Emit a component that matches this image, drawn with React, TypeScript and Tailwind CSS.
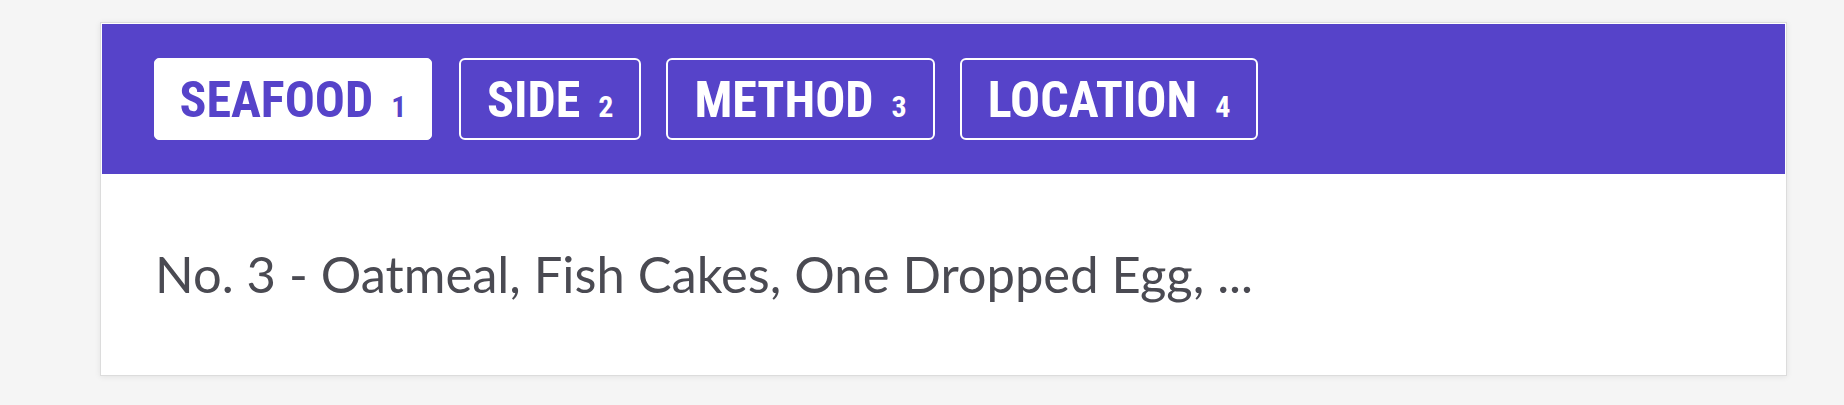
const tabs = [
  { label: 'SEAFOOD', count: 1, active: true },
  { label: 'SIDE', count: 2, active: false },
  { label: 'METHOD', count: 3, active: false },
  { label: 'LOCATION', count: 4, active: false },
];

export default function App() {
  return (
    <div className="min-h-[405px] w-full bg-[#f5f5f5] pt-[22px]">
      <div className="ml-[100px] w-[1687px] border border-[#dcdcdc] bg-white p-px shadow-[0_1px_6px_rgba(0,0,0,0.08)]">
        {/* category tabs */}
        <div className="flex h-[150px] items-center gap-[25px] bg-[#5643c9] px-[52px]">
          {tabs.map((t) => (
            <button
              key={t.label}
              className={
                t.active
                  ? 'mr-[2px] flex h-[82px] items-baseline rounded-[5px] border border-white bg-white px-[24.5px] pt-[2px] text-[#5643c9]'
                  : 'flex h-[82px] items-baseline rounded-[6px] border-2 border-white px-[26px] pt-[2px] text-white'
              }
              style={{ fontFamily: 'Roboto, sans-serif', fontStretch: 'condensed' }}
            >
              <span className="self-center text-[50px] font-bold leading-none">
                {t.label}
                <span className="ml-[18px] text-[30px]">{t.count}</span>
              </span>
            </button>
          ))}
        </div>

        {/* selected item */}
        <div className="flex h-[200px] items-center px-[53px]">
          <p className="font-['Lato',sans-serif] text-[50.7px] leading-none text-[#4a4a52]">
            No. 3 - Oatmeal, Fish Cakes, One Dropped Egg, ...
          </p>
        </div>
      </div>
    </div>
  );
}
